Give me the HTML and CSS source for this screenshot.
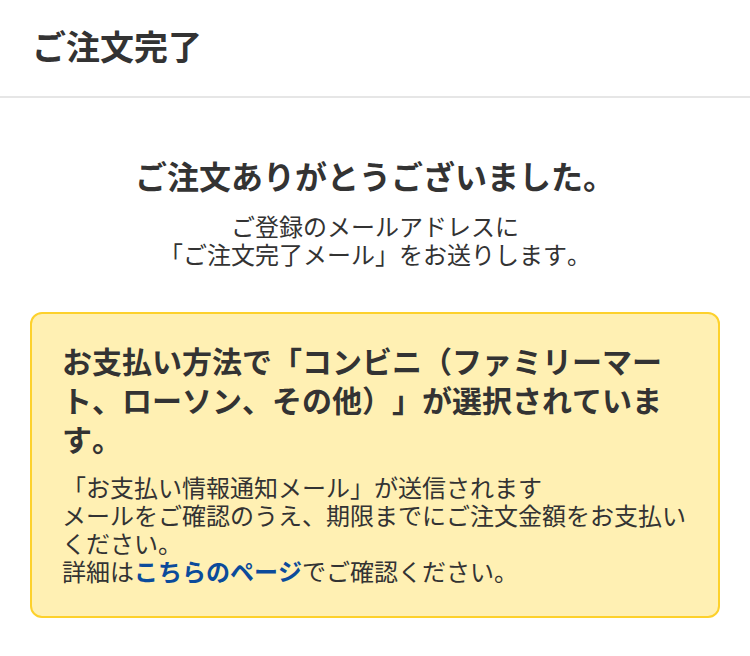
FILE: index.html
```html
<!DOCTYPE html>
<html lang="ja">
<head>
<meta charset="utf-8">
<title>ご注文完了</title>
<link rel="stylesheet" href="styles.css">
</head>
<body>
<header class="header">
  <h1 class="header-title">ご注文完了</h1>
</header>
<main class="main">
  <h2 class="thanks">ご注文ありがとうございました。</h2>
  <p class="lead">ご登録のメールアドレスに<br>「ご注文完了メール」をお送りします。</p>
  <section class="notice">
    <h3 class="notice-title">お支払い方法で「コンビニ（ファミリーマート、ローソン、その他）」が選択されています。</h3>
    <p class="notice-text">「お支払い情報通知メール」が送信されます<br>メールをご確認のうえ、期限までにご注文金額をお支払いください。<br>詳細は<a class="notice-link" href="#">こちらのページ</a>でご確認ください。</p>
  </section>
</main>
</body>
</html>
```

FILE: styles.css
```css
* { box-sizing: border-box; }
html, body { margin: 0; padding: 0; background: #fff; }
body {
  font-family: "Noto Sans CJK JP", "Noto Sans", sans-serif;
  color: #333;
  width: 750px;
  text-spacing-trim: space-all;
  font-kerning: none;
}
.header {
  height: 98px;
  border-bottom: 2px solid #e6e6e6;
  display: flex;
  align-items: center;
  padding: 0 32px 4px;
}
.header-title {
  margin: 0;
  font-size: 34px;
  line-height: 40px;
  font-weight: 700;
  color: #333;
}
.main {
  padding: 56px 30px 0;
}
.thanks {
  margin: 0;
  text-align: center;
  font-size: 32px;
  line-height: 42px;
  font-weight: 700;
}
.lead {
  margin: 16px 0 0;
  text-align: center;
  font-size: 24px;
  line-height: 28px;
}
.notice {
  margin-top: 44px;
  background: #fff0b3;
  border: 2px solid #fdd12c;
  border-radius: 12px;
  padding: 27px 30px 31px;
}
.notice-title {
  margin: 0;
  font-size: 30px;
  line-height: 39px;
  font-weight: 700;
}
.notice-text {
  margin: 15px 0 0;
  font-size: 24px;
  line-height: 28px;
}
.notice-link {
  color: #0b4b9b;
  font-weight: 700;
  text-decoration: none;
}
```
